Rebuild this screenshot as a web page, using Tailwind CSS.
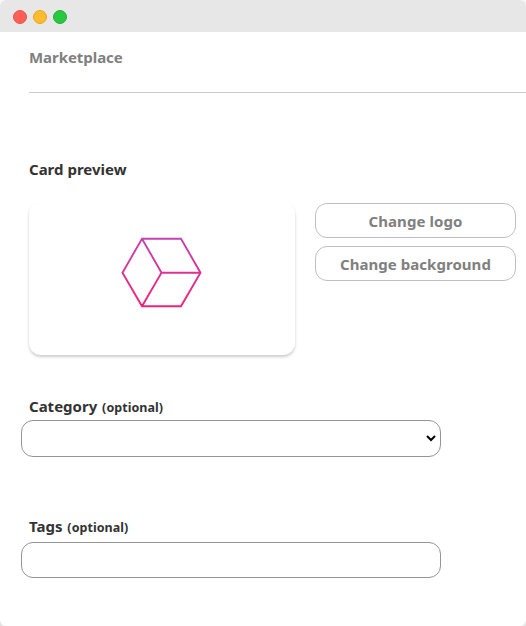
<!DOCTYPE html>
<html lang="en">
<head>
<meta charset="utf-8">
<title>Marketplace</title>
<script src="https://cdn.jsdelivr.net/npm/@tailwindcss/browser@4"></script>
</head>
<body class="h-[626px] w-[526px] overflow-hidden bg-[linear-gradient(#f8f8f8_50%,#e4e4e4_50%)] font-['Noto_Sans','Open_Sans',sans-serif] font-bold text-[#333]">
<div class="flex h-full w-full flex-col overflow-hidden rounded-[6px] bg-white">
  <header class="flex h-8 shrink-0 items-center gap-[6px] bg-[#e7e7e7] pt-[2px] pl-[13px]">
    <span class="size-[14px] rounded-full border border-[#ed5149] bg-[#ff5f57]"></span>
    <span class="size-[14px] rounded-full border border-[#e5a52d] bg-[#febc2e]"></span>
    <span class="size-[14px] rounded-full border border-[#20b236] bg-[#28c840]"></span>
  </header>
  <main class="flex flex-col pl-[29px]">
    <h1 class="h-[61px] border-b border-[#ccc] pt-[13px] text-[15px] leading-6 tracking-[-0.05px] text-[#808080]">Marketplace</h1>
    <h2 class="mt-[64px] text-[15px] leading-6">Card preview</h2>
    <section class="mt-[21px] flex gap-5">
      <div class="flex h-[153px] w-[266px] items-center justify-center rounded-xl bg-white shadow-[0_2px_3px_rgba(0,0,0,0.2)]">
        <svg class="mt-[-13px] mr-px h-[72px] w-[82px]" viewBox="0 0 82 72" fill="none" stroke="url(#brand)" stroke-width="1.9" stroke-linejoin="miter">
          <defs><linearGradient id="brand" gradientUnits="userSpaceOnUse" x1="0" y1="2" x2="0" y2="70"><stop stop-color="#c145b5"/><stop offset=".5" stop-color="#dc3295"/><stop offset="1" stop-color="#f02277"/></linearGradient></defs>
          <path d="M21 2.7H60L79.5 36.7L60 70.3H21L1.5 36.7ZL40.5 36.7L21 70.3M40.5 36.7H79.5"/>
        </svg>
      </div>
      <div class="flex w-[201px] flex-col gap-2 pt-px text-[15px] text-[#808080]">
        <button class="h-[35px] rounded-xl border border-[#bfbfbf] pt-px tracking-[0.08px]">Change logo</button>
        <button class="h-[35px] rounded-xl border border-[#bfbfbf] pt-px tracking-[0.04px]">Change background</button>
      </div>
    </section>
    <label class="mt-[39px] h-6 text-[15px] leading-6" for="category">Category <span class="ml-px text-[12.5px] tracking-[0.05px]">(optional)</span></label>
    <div class="relative mt-[2px] -ml-2 h-[37px] w-[420px]">
      <select id="category" class="h-full w-full appearance-none rounded-xl border border-[#949494] bg-white"></select>
      <svg class="pointer-events-none absolute top-[14px] right-[4px] h-[8px] w-[12px]" viewBox="0 0 12 8" fill="none" stroke="#000" stroke-width="2"><path d="M2 2L6 6L10 2"/></svg>
    </div>
    <label class="mt-[57px] h-6 text-[15px] leading-6" for="tags">Tags <span class="ml-px text-[12.5px] tracking-[0.05px]">(optional)</span></label>
    <input id="tags" class="mt-[4px] -ml-2 h-[36px] w-[420px] rounded-xl border border-[#949494] bg-white">
  </main>
</div>
</body>
</html>
